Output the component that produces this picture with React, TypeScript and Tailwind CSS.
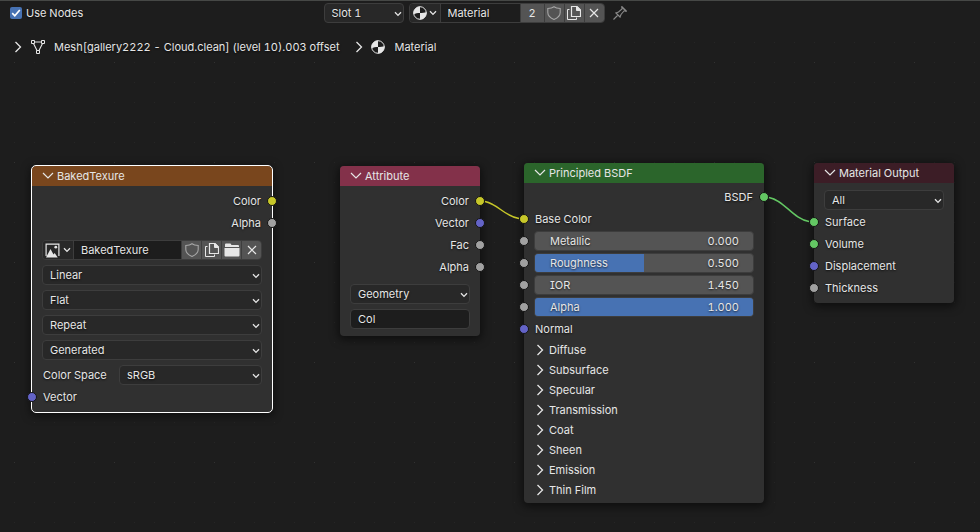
import { useId, useState } from "react";
import type { ReactNode } from "react";

const socketColors = {
  color: "bg-[#c7c729]",
  value: "bg-[#a1a1a1]",
  vector: "bg-[#6363c7]",
  shader: "bg-[#63c763]",
};

type SocketType = keyof typeof socketColors;

const panels = [
  "Diffuse",
  "Subsurface",
  "Specular",
  "Transmission",
  "Coat",
  "Sheen",
  "Emission",
  "Thin Film",
];

interface IconProps {
  className?: string;
}

const ChevronDown = ({ className = "" }: IconProps) => (
  <svg viewBox="0 0 12 8" className={className} fill="none" stroke="currentColor" strokeWidth="1.2">
    <path d="M1 1 6 6 11 1" />
  </svg>
);

const SmallChevron = ({ className = "" }: IconProps) => (
  <svg viewBox="0 0 8 6" className={`h-1.5 w-2 ${className}`} fill="none" stroke="currentColor" strokeWidth="1.3">
    <path d="M1 1.2 4 4.4 7 1.2" />
  </svg>
);

const ChevronRight = ({ className = "" }: IconProps) => (
  <svg viewBox="0 0 8 12" className={`h-3 w-2 ${className}`} fill="none" stroke="currentColor" strokeWidth="1.3">
    <path d="M1.5 1 6.5 6 1.5 11" />
  </svg>
);

const MaterialIcon = () => (
  <svg viewBox="0 0 14 14" className="size-3.5">
    <circle cx="7" cy="7" r="6.3" fill="#1d1d1d" stroke="#e6e6e6" strokeWidth="1" />
    <path d="M7 7V.5A6.5 6.5 0 0 0 .5 7c0 .5 0 .9.1 1.300C2.500 7.500 4.500 7 7 7Z" fill="#e6e6e6" />
    <path d="M7 7c2.500 0 4.800-.3 6.500-1 .3 4-2.500 7.500-6.500 7.500Z" fill="#e6e6e6" />
  </svg>
);

const MeshIcon = () => (
  <svg viewBox="0 0 14 14" className="size-3.5" fill="none" stroke="#e6e6e6">
    <path d="M3.500 2h7M2.500 3.500 6 10.500M11.500 3.500 8 10.500" strokeWidth="1.1" />
    <path d="M.5.5h3v3h-3zM10.500.5h3v3h-3zM5.500 10.500h3v3h-3z" />
  </svg>
);

const ShieldIcon = () => (
  <svg viewBox="0 0 14 14" className="size-3.5" fill="none" stroke="#a6a6a6" strokeWidth="1.1">
    <path d="M7 .8C5.500 2 3.500 2.500.8 2.500v4C.8 10 3.500 12 7 13.500c3.500-1.500 6.200-3.500 6.200-7v-4C10.500 2.500 8.500 2 7 .8Z" />
  </svg>
);

const CopyIcon = () => (
  <svg viewBox="0 0 14 14" className="size-3.5" fill="none" stroke="#e6e6e6" strokeWidth="1">
    <path d="M2.500 3.500h-2v10h9v-2" />
    <path d="M4.500.5h5.500l3.500 3.500v6.500h-9z" strokeWidth="1.2" />
    <path d="M9.500.5h.5l3.500 3.500v.5h-4z" fill="#e6e6e6" />
  </svg>
);

const CloseIcon = () => (
  <svg viewBox="0 0 10 10" className="size-2.5" fill="none" stroke="#e6e6e6" strokeWidth="1.2">
    <path d="m1 1 8 8M9 1 1 9" />
  </svg>
);

const FolderIcon = () => (
  <svg viewBox="0 0 16 14" className="h-3.5 w-4" fill="#e6e6e6">
    <path d="M1 4V1.500Q1 .5 2 .5h4.500l1 1.500H14q1 0 1 1v1Z" />
    <path d="M.5 5h15v7.500q0 1-1 1h-13q-1 0-1-1Z" />
  </svg>
);

const ImageIcon = () => (
  <svg viewBox="0 0 16 16" className="size-4" fill="#e6e6e6">
    <path d="M.5 14V1.500h14V14h-1.200V2.700H1.700V14Z" />
    <path d="M1 15.500 5.500 7l3 5.500 1.200-1.500 3 4.500Z" />
    <circle cx="10.800" cy="5.200" r="1.400" />
  </svg>
);

const PinIcon = () => (
  <svg viewBox="0 0 14 14" className="size-3.5" fill="none" stroke="#8a8a8a" strokeWidth="1.1">
    <path d="M.5 13.500 5 9M2.500 6.500l5 5M3.500 6.800 5.500 6 9 3V.8L13.200 5H11L8 8.500l-.8 2" />
    <path d="M8.500.6 13.400 5.500" />
  </svg>
);

interface SelectProps {
  label: string;
  value: string;
  className?: string;
}

const Select = ({ label, value, className = "" }: SelectProps) => (
  <div className={`relative h-5 ${className}`}>
    <select
      aria-label={label}
      defaultValue={value}
      className="block h-5 w-full appearance-none rounded border border-[#3d3d3d] bg-[#282828] pl-[7px] pr-4 leading-4 outline-none [text-shadow:inherit]"
    >
      <option>{value}</option>
    </select>
    <SmallChevron className="pointer-events-none absolute right-0.5 top-2" />
  </div>
);

interface DataBlockProps {
  name: string;
  icon: ReactNode;
  users?: number;
  withOpen?: boolean;
  className?: string;
}

// Browse button, name field and the user / fake user / copy / unlink buttons
const DataBlock = ({ name, icon, users, withOpen, className = "" }: DataBlockProps) => {
  const button = "flex w-5 shrink-0 items-center justify-center border-l border-[#3d3d3d] bg-[#545454]";

  return (
    <div className={`flex h-5 overflow-hidden rounded border border-[#3d3d3d] ${className}`}>
      <button aria-label={`Browse ${name}`} className="flex w-[30px] shrink-0 items-center justify-center gap-0.5 bg-[#282828]">
        {icon}
        <SmallChevron />
      </button>
      <input
        aria-label="Name"
        defaultValue={name}
        className="min-w-0 flex-1 border-l border-[#3d3d3d] bg-[#1d1d1d] pl-[7px] outline-none [text-shadow:inherit]"
      />
      {users && <button className="w-6 shrink-0 border-l border-[#3d3d3d] bg-[#545454]">{users}</button>}
      <button aria-label="Fake user" className={button}>
        <ShieldIcon />
      </button>
      <button aria-label="New" className={button}>
        <CopyIcon />
      </button>
      {withOpen && (
        <button aria-label="Open" className={button}>
          <FolderIcon />
        </button>
      )}
      <button aria-label="Unlink" className={button}>
        <CloseIcon />
      </button>
    </div>
  );
};

interface SocketRowProps {
  type: SocketType;
  output?: boolean;
  children: ReactNode;
}

const SocketRow = ({ type, output, children }: SocketRowProps) => (
  <div className={`relative flex h-[22px] items-center ${output ? "justify-end px-[11px]" : "px-[11px]"}`}>
    <span
      className={`absolute size-2.5 rounded-full border border-[#141414] ${socketColors[type]} ${
        output ? "-right-[5px]" : "-left-[5px]"
      }`}
    />
    {children}
  </div>
);

interface ValueSliderProps {
  label: string;
  initial: number;
  max?: number;
}

const ValueSlider = ({ label, initial, max }: ValueSliderProps) => {
  const id = useId();
  const [value, setValue] = useState(initial);

  return (
    <div className="relative -mx-px flex h-5 flex-1 items-center justify-between overflow-hidden rounded border border-[#3d3d3d] bg-[#545454] pr-3.5 pl-[15px]">
      {max && (
        <span
          className="absolute inset-y-0 left-0 bg-[#4772b3]"
          style={{ width: `${(value / max) * 100}%` }}
        />
      )}
      <label htmlFor={id} className="relative">
        {label}
      </label>
      <span className="relative">{value.toFixed(3)}</span>
      <input
        id={id}
        type="range"
        min={0}
        max={max ?? 10}
        step={0.001}
        value={value}
        onChange={(e) => setValue(Number(e.target.value))}
        className="absolute inset-0 w-full cursor-ew-resize opacity-0"
      />
    </div>
  );
};

interface NodeProps {
  title: string;
  place: string;
  header: string;
  selected?: boolean;
  children: ReactNode;
}

const Node = ({ title, place, header, selected, children }: NodeProps) => (
  <section
    className={`absolute rounded bg-[#303030] shadow-[0_2px_8px_2px_rgba(0,0,0,0.5)] ${place} ${
      selected ? "outline outline-white" : ""
    }`}
  >
    <h2 className={`flex h-5 items-center rounded-t ${header}`}>
      <button aria-expanded="true" className="flex items-center gap-[3px] pl-2.5">
        <ChevronDown className="h-2 w-3" />
        {title}
      </button>
    </h2>
    {children}
  </section>
);

const TopBar = () => (
  <header className="relative grid h-[26px] shrink-0 grid-cols-[1fr_auto_1fr] items-center border-t border-[#464846] bg-[#1d1d1d] pr-10 pb-px pl-2.5">
    <label className="flex items-center gap-1">
      <span className="relative size-3">
        <input
          type="checkbox"
          defaultChecked
          className="peer block size-3 appearance-none rounded-xs bg-[#545454] checked:bg-[#4772b3]"
        />
        <svg
          viewBox="0 0 12 12"
          className="pointer-events-none absolute inset-0 hidden peer-checked:block"
          fill="none"
          stroke="white"
          strokeWidth="1.700"
        >
          <path d="M2.200 6.200 4.800 8.800 9.800 3" />
        </svg>
      </span>
      Use Nodes
    </label>
    <div className="flex items-center">
      <Select label="Slot" value="Slot 1" className="w-20" />
      <DataBlock name="Material" icon={<MaterialIcon />} users={2} className="ml-[5px] w-[196px]" />
      <button aria-label="Pin" className="ml-2">
        <PinIcon />
      </button>
    </div>
  </header>
);

const Breadcrumb = () => (
  <nav className="relative flex h-[42px] shrink-0 items-center pl-3.5">
    <ChevronRight />
    <a href="#mesh" className="ml-[9px] flex items-center gap-[9px]">
      <MeshIcon />
      Mesh[gallery2222 - Cloud.clean] (level 10).003 offset
    </a>
    <ChevronRight className="ml-4" />
    <a href="#material" className="ml-2 flex items-center gap-[9px]">
      <MaterialIcon />
      Material
    </a>
  </nav>
);

const GridDots = () => (
  <svg className="absolute inset-0 size-full">
    <defs>
      <pattern id="minor" x="14" y="2" width="20" height="20" patternUnits="userSpaceOnUse">
        <rect width="1" height="1" fill="#262626" />
      </pattern>
      <pattern id="major" x="14" y="62" width="100" height="100" patternUnits="userSpaceOnUse">
        <rect width="1" height="1" fill="#323232" />
      </pattern>
    </defs>
    <rect width="100%" height="100%" fill="url(#minor)" />
    <rect width="100%" height="100%" fill="url(#major)" />
  </svg>
);

const Links = () => (
  <svg className="pointer-events-none absolute inset-0 size-full" fill="none" strokeWidth="1.500">
    <path d="M485 133.500C498 136 504 148 519 150.500" stroke="#c7c729" />
    <path d="M769 129.500C784 132 793 151 809 153.500" stroke="#63c763" />
  </svg>
);

const App = () => {
  return (
    <div className="relative flex h-screen flex-col overflow-hidden bg-[#1d1d1d] font-['Inter',sans-serif] text-[11px] leading-4 tabular-nums text-[#e6e6e6] [font-feature-settings:'cv08'] [text-shadow:0_1px_2px_rgba(0,0,0,0.7)]">
      <GridDots />
      <TopBar />
      <Breadcrumb />
      <main className="relative flex-1">
        <Node title="BakedTexure" place="left-8 top-[98px] w-60" header="bg-[#79461d]" selected>
          <div className="py-1">
            <SocketRow type="color" output>
              Color
            </SocketRow>
            <SocketRow type="value" output>
              Alpha
            </SocketRow>
            <div className="mt-1.5 flex flex-col gap-[5px] px-2.5">
              <DataBlock name="BakedTexure" icon={<ImageIcon />} withOpen />
              <Select label="Interpolation" value="Linear" />
              <Select label="Projection" value="Flat" />
              <Select label="Extension" value="Repeat" />
              <Select label="Source" value="Generated" />
              <div className="flex items-center justify-between">
                <span className="pl-px">Color Space</span>
                <Select label="Color Space" value="sRGB" className="w-[143px]" />
              </div>
            </div>
            <div className="mt-px">
              <SocketRow type="vector">Vector</SocketRow>
            </div>
          </div>
        </Node>

        <Node title="Attribute" place="left-[340px] top-[98px] w-[140px]" header="bg-[#83314a]">
          <div className="pt-1 pb-[7px]">
            <SocketRow type="color" output>
              Color
            </SocketRow>
            <SocketRow type="vector" output>
              Vector
            </SocketRow>
            <SocketRow type="value" output>
              Fac
            </SocketRow>
            <SocketRow type="value" output>
              Alpha
            </SocketRow>
            <div className="mt-1.5 flex flex-col gap-[5px] px-2.5">
              <Select label="Type" value="Geometry" />
              <input
                aria-label="Attribute name"
                defaultValue="Col"
                className="h-5 w-full rounded border border-[#3d3d3d] bg-[#1d1d1d] px-[7px] outline-none [text-shadow:inherit]"
              />
            </div>
          </div>
        </Node>

        <Node title="Principled BSDF" place="left-[524px] top-[95px] w-60" header="bg-[#2b652b]">
          <div className="py-[3px]">
            <SocketRow type="shader" output>
              BSDF
            </SocketRow>
            <SocketRow type="color">Base Color</SocketRow>
            <SocketRow type="value">
              <ValueSlider label="Metallic" initial={0} max={1} />
            </SocketRow>
            <SocketRow type="value">
              <ValueSlider label="Roughness" initial={0.5} max={1} />
            </SocketRow>
            <SocketRow type="value">
              <ValueSlider label="IOR" initial={1.45} />
            </SocketRow>
            <SocketRow type="value">
              <ValueSlider label="Alpha" initial={1} max={1} />
            </SocketRow>
            <SocketRow type="vector">Normal</SocketRow>
            {panels.map((panel) => (
              <button key={panel} className="flex h-5 w-full items-center gap-[5px] pl-3">
                <ChevronRight />
                {panel}
              </button>
            ))}
          </div>
        </Node>

        <Node title="Material Output" place="left-[814px] top-[95px] w-[140px]" header="bg-[#3c1d26]">
          <div className="pt-[7px] pb-1">
            <div className="mb-px px-2.5">
              <Select label="Target" value="All" />
            </div>
            <SocketRow type="shader">Surface</SocketRow>
            <SocketRow type="shader">Volume</SocketRow>
            <SocketRow type="vector">Displacement</SocketRow>
            <SocketRow type="value">Thickness</SocketRow>
          </div>
        </Node>
        <Links />
      </main>
    </div>
  );
};

export default App;
